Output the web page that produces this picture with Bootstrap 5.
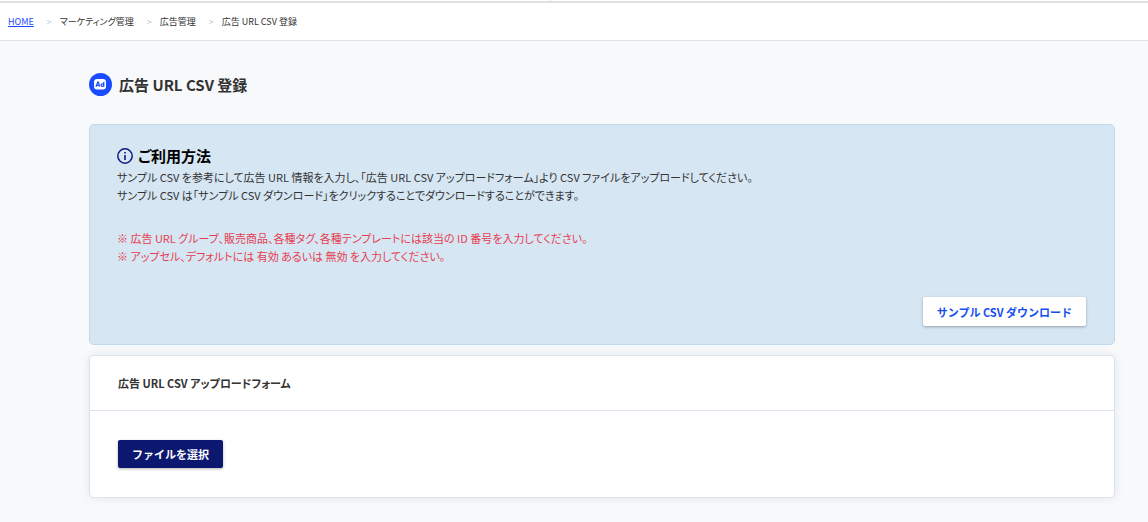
<!DOCTYPE html>
<html lang="ja">
<head>
<meta charset="utf-8">
<meta name="viewport" content="width=device-width, initial-scale=1">
<title>広告 URL CSV 登録</title>
<link href="https://cdn.jsdelivr.net/npm/bootstrap@5.3.0/dist/css/bootstrap.min.css" rel="stylesheet">
<style>
  body {
    background: #f8f9fb;
    color: #333;
    font-family: "Noto Sans CJK JP", sans-serif;
    font-feature-settings: "palt";
    font-size: 11px;
    line-height: 18px;
  }
  .top-edge { height: 3px; border-bottom: 2px solid #e0e0e0; }
  .top-edge span { width: 1px; background: #e0e0e0; }
  .crumbs { --bs-breadcrumb-divider: ">"; --bs-breadcrumb-divider-color: #c3c6d4; font-size: 9px; padding: 10px 8px 9px; }
  .crumb-bar { border-bottom: 1px solid #dfe3ea; }
  .crumbs .breadcrumb-item + .breadcrumb-item { padding-left: 13px; }
  .crumbs .breadcrumb-item + .breadcrumb-item::before { padding-right: 8px; }
  .crumbs .breadcrumb-item { color: #333; }
  .crumbs a { color: #1a4bff; }
  .page { padding: 32px 33px 24px 89px; }
  .title-row { gap: 7px; }
  .page-title { font-size: 15px; line-height: 24px; font-weight: 700; }
  .guide { background: #d6e6f3; border: 1px solid #c0d8ee; border-radius: 5px; padding: 21px 28px 18px 27px; margin-top: 27px; }
  .guide-title { font-size: 15px; line-height: 20px; font-weight: 700; color: #000; }
  .guide-head { gap: 5px; padding-bottom: 2px; }
  .guide-text { margin-bottom: 25px; }
  .guide-note { color: #e63e50; margin-bottom: 32px; }
  .form-panel { border: 1px solid #dde3ea; border-radius: 5px; box-shadow: 0 0 10px rgba(60, 110, 130, .12); margin-top: 10px; }
  .form-panel .card-header { border-color: #dfe2ec; padding: 18px 28px; font-size: 11px; line-height: 18px; font-weight: 700; }
  .form-panel .card-body { padding: 29px 28px; }
  .action { border: 0; border-radius: 2px; padding: 5px 14px; font-size: 11px; line-height: 18px; font-weight: 700; box-shadow: 0 1px 3px rgba(0, 0, 0, .3); }
  .action-light, .action-light:hover { background: #fff; color: #1450f0; padding-top: 6px; }
  .action-dark, .action-dark:hover { background: #0c1770; color: #fff; }
</style>
</head>
<body>
<div class="top-edge bg-white d-flex justify-content-center"><span class="me-5"></span></div>
<nav class="crumb-bar bg-white" aria-label="パンくずリスト">
  <ol class="breadcrumb crumbs mb-0">
    <li class="breadcrumb-item"><a href="#">HOME</a></li>
    <li class="breadcrumb-item">マーケティング管理</li>
    <li class="breadcrumb-item">広告管理</li>
    <li class="breadcrumb-item" aria-current="page">広告 URL CSV 登録</li>
  </ol>
</nav>
<main class="page">
  <div class="title-row d-flex align-items-start">
    <svg width="23" height="23" viewBox="0 0 23 23" aria-hidden="true">
      <circle cx="11.500" cy="11.500" r="11.500" fill="#1a4bff"/>
      <rect x="5" y="6" width="12" height="10.500" rx="3" fill="#fff"/>
      <path d="M6.900 13.700 8.800 9.200h.8l.9 4.500M7.700 12.300h2.400M14.800 8.700v5M14.700 12.200a1.300 1.300 0 1 1-2.600 0a1.300 1.300 0 0 1 2.600 0" fill="none" stroke="#1a4bff" stroke-width="1.200"/>
    </svg>
    <h1 class="page-title mb-0">広告 URL CSV 登録</h1>
  </div>
  <section class="guide">
    <div class="guide-head d-flex align-items-center">
      <svg width="16" height="16" viewBox="0 0 16 16" fill="none" stroke="#101c80" aria-hidden="true">
        <circle cx="8" cy="8" r="7.200" stroke-width="1.500"/>
        <path d="M8 7v5M8 4v1.600" stroke-width="1.600"/>
      </svg>
      <h2 class="guide-title mb-0">ご利用方法</h2>
    </div>
    <p class="guide-text">サンプル CSV を参考にして広告 URL 情報を入力し、「広告 URL CSV アップロードフォーム」より CSV ファイルをアップロードしてください。<br>サンプル CSV は「サンプル CSV ダウンロード」をクリックすることでダウンロードすることができます。</p>
    <p class="guide-note">※ 広告 URL グループ、販売商品、各種タグ、各種テンプレートには該当の ID 番号を入力してください。<br>※ アップセル、デフォルトには 有効 あるいは 無効 を入力してください。</p>
    <div class="text-end"><button type="button" class="btn action action-light">サンプル CSV ダウンロード</button></div>
  </section>
  <section class="card form-panel">
    <h2 class="card-header bg-white mb-0">広告 URL CSV アップロードフォーム</h2>
    <div class="card-body"><button type="button" class="btn action action-dark">ファイルを選択</button></div>
  </section>
</main>
<script src="https://cdn.jsdelivr.net/npm/bootstrap@5.3.0/dist/js/bootstrap.bundle.min.js"></script>
</body>
</html>
